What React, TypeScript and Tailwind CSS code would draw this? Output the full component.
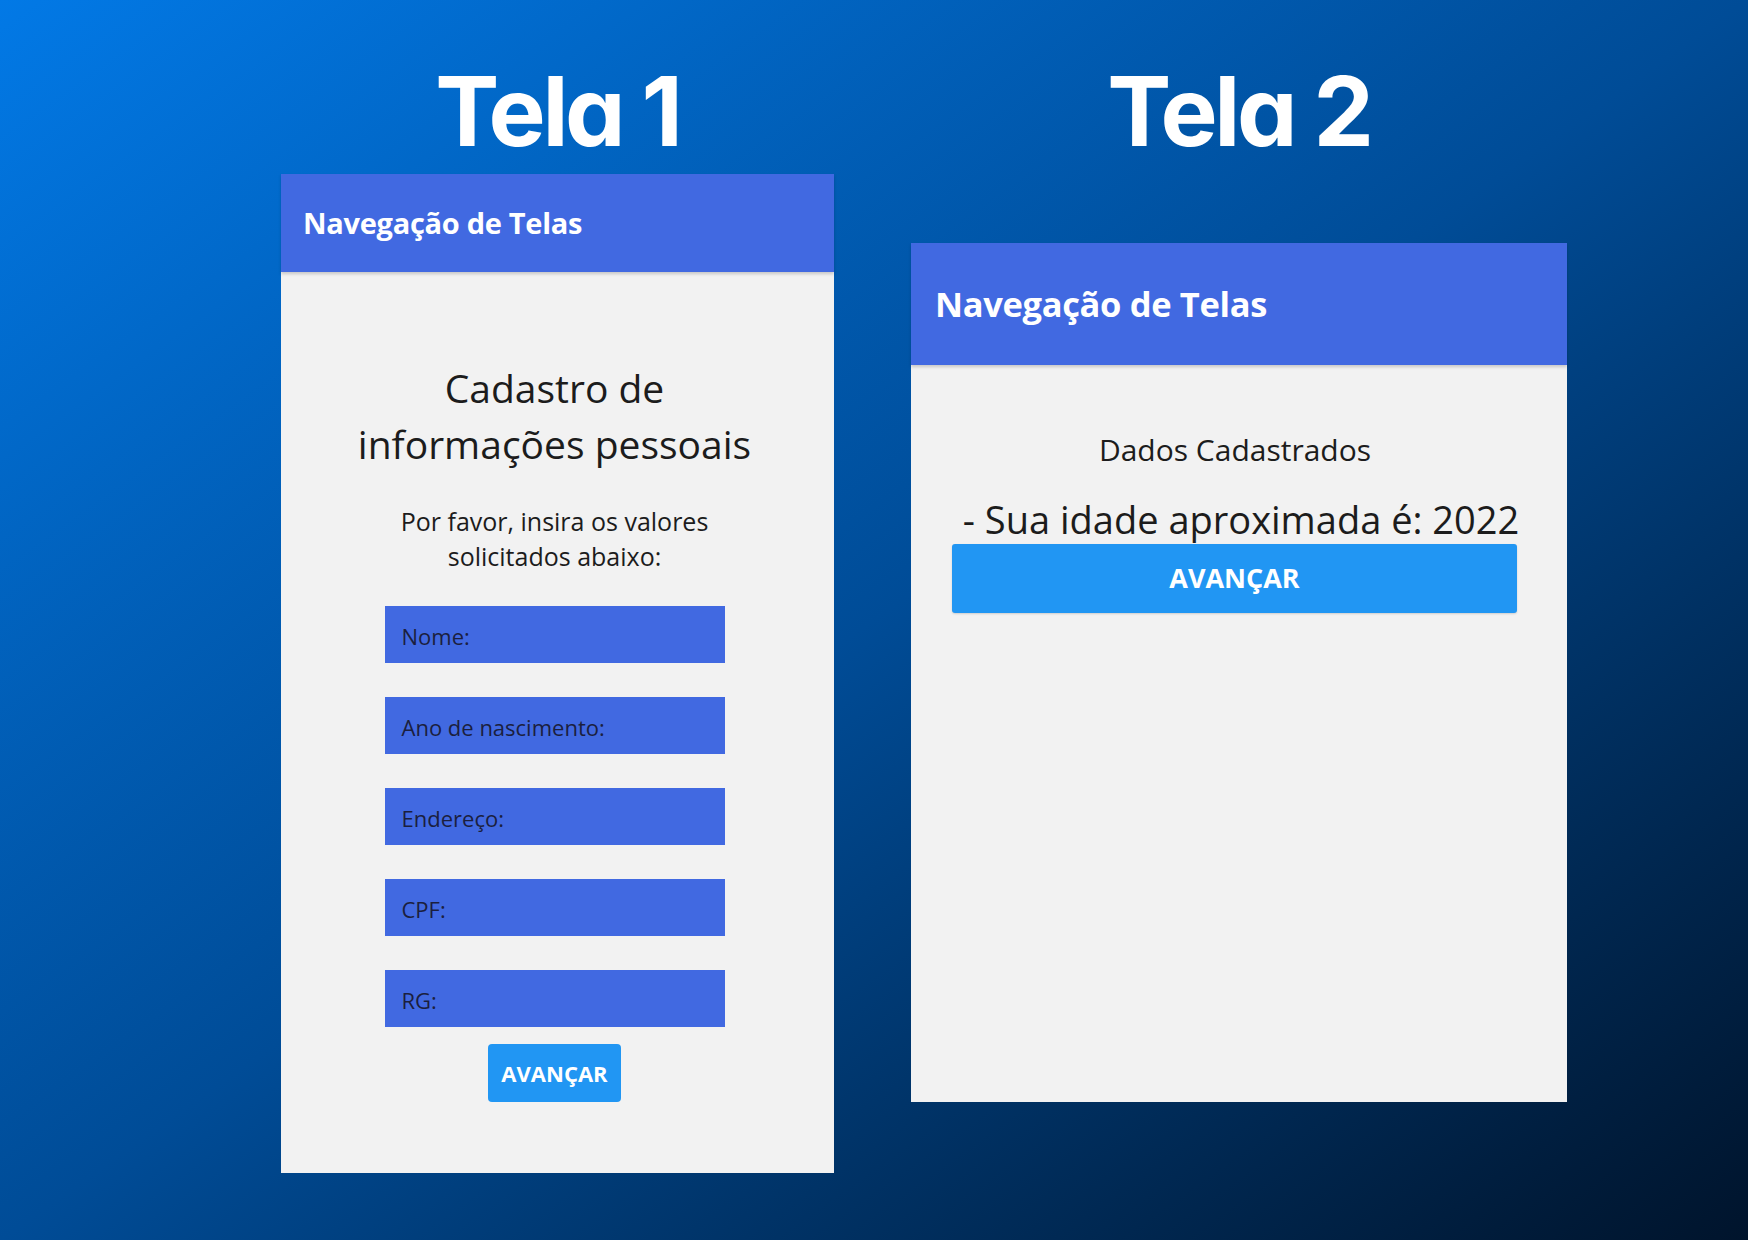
const fields = ['Nome:', 'Ano de nascimento:', 'Endereço:', 'CPF:', 'RG:'];

function Header({ big }: { big?: boolean }) {
  return (
    <div
      className={`flex items-center bg-[#4169e1] shadow-[0_2px_3px_rgba(0,0,0,0.18)] ${
        big ? 'h-[122px] pl-[24px] text-[34.5px]' : 'h-[98px] pl-[22px] text-[29px]'
      }`}
    >
      <span className="font-bold text-white tracking-[-0.01em]">Navegação de Telas</span>
    </div>
  );
}

export default function App() {
  return (
    <div
      className="w-[1748px] h-[1240px] overflow-hidden bg-linear-to-br from-[#0279e6] via-[#004c97] to-[#00142c] flex items-start gap-[77px] pl-[281px] pt-[63px]"
      style={{ fontFamily: '"Open Sans", "Noto Sans", sans-serif' }}
    >
      {/* Tela 1 */}
      <div className="w-[553px] flex flex-col items-center">
        <h1 className="h-[96px] text-[96px] leading-none font-bold text-white tracking-[-0.035em] [font-family:Inter,sans-serif] [font-feature-settings:'cv11']">
          Tela 1
        </h1>
        <div className="mt-[15px] w-full h-[999px] bg-[#f2f2f2] flex flex-col">
          <Header />
          <div className="flex flex-col items-center text-[#1c1c1c] pr-[6px]">
            <h2 className="mt-[88px] text-[39px] leading-[56px] text-center">
              Cadastro de
              <br />
              informações pessoais
            </h2>
            <p className="mt-[32px] text-[25px] leading-[35px] text-center">
              Por favor, insira os valores
              <br />
              solicitados abaixo:
            </p>
            <div className="mt-[32px] flex flex-col gap-[34px]">
              {fields.map((f) => (
                <div
                  key={f}
                  className="w-[340px] h-[57px] bg-[#4169e1] flex items-center pl-[17px] pt-[3px] text-[22px] text-[#1b1f3e]"
                >
                  {f}
                </div>
              ))}
            </div>
            <button className="mt-[17px] w-[133px] h-[58px] rounded-[4px] bg-[#2196f3] text-white font-bold text-[22px]">
              AVANÇAR
            </button>
          </div>
        </div>
      </div>

      {/* Tela 2 */}
      <div className="w-[656px] flex flex-col items-center">
        <h1 className="h-[96px] text-[96px] leading-none font-bold text-white tracking-[-0.035em] [font-family:Inter,sans-serif] [font-feature-settings:'cv11']">
          Tela 2
        </h1>
        <div className="mt-[84px] w-full h-[859px] bg-[#f2f2f2] flex flex-col">
          <Header big />
          <div className="flex flex-col items-center text-[#1c1c1c]">
            <p className="mt-[65px] text-[30px] leading-[40px] mr-[8px]">Dados Cadastrados</p>
            <p className="mt-[24px] text-[38px] leading-[50px] whitespace-nowrap pl-[4px]">
              - Sua idade aproximada é: 2022
            </p>
            <button className="mr-[9px] w-[565px] h-[69px] rounded-[3px] bg-[#2196f3] text-white font-bold text-[27px] shadow-[0_1px_2px_rgba(0,0,0,0.15)]">
              AVANÇAR
            </button>
          </div>
        </div>
      </div>
    </div>
  );
}
